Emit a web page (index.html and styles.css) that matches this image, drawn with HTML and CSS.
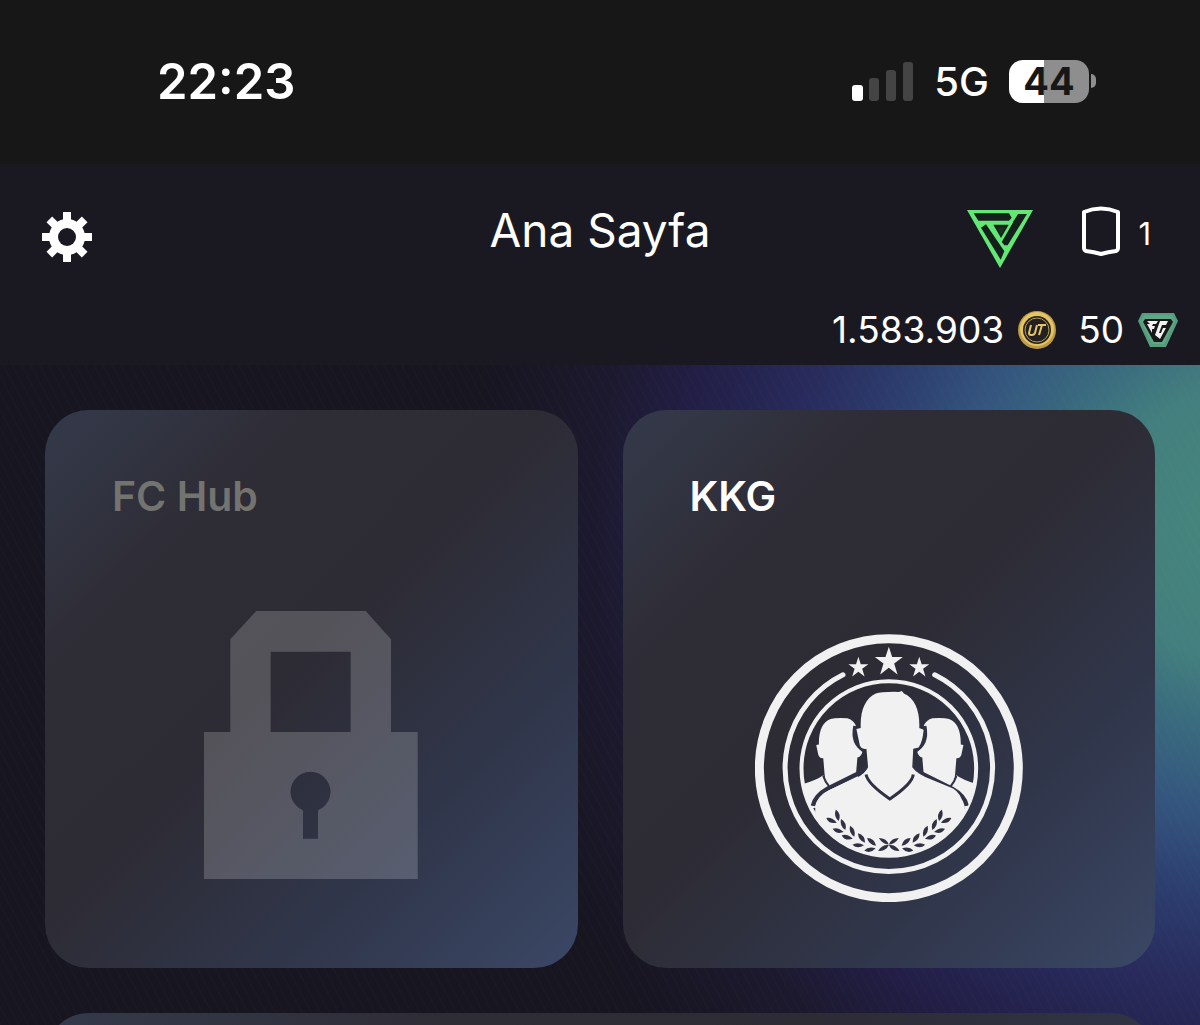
FILE: index.html
```html
<!DOCTYPE html>
<html lang="tr">
<head>
  <meta charset="UTF-8">
  <meta name="viewport" content="width=device-width, initial-scale=1.0">
  <title>Ana Sayfa</title>
  <link rel="stylesheet" href="styles.css">
</head>
<body>

<div class="status-bar">
  <time class="clock">22:23</time>
  <div class="status-right">
    <svg class="signal" viewBox="0 0 62 40" aria-hidden="true">
      <rect x="0" y="24" width="11" height="16" rx="3" fill="#fff"/>
      <rect x="17" y="17" width="10" height="23" rx="3"/>
      <rect x="34" y="9" width="10" height="31" rx="3"/>
      <rect x="51" y="1" width="10" height="39" rx="3"/>
    </svg>
    <span class="network">5G</span>
    <div class="battery">44</div>
    <span class="battery-tip"></span>
  </div>
</div>

<header class="header">
  <div class="title-row">
    <button class="icon-btn" aria-label="Ayarlar">
      <svg class="gear" viewBox="0 0 50 50">
        <g fill="#fff">
          <rect id="tooth" x="21" y="0" width="8" height="50"/>
          <use href="#tooth" transform="rotate(45 25 25)"/>
          <use href="#tooth" transform="rotate(90 25 25)"/>
          <use href="#tooth" transform="rotate(135 25 25)"/>
          <circle cx="25" cy="25" r="18"/>
        </g>
        <circle cx="25" cy="25" r="9" fill="#1a1922"/>
      </svg>
    </button>
    <h1>Ana Sayfa</h1>
    <div class="title-icons">
      <svg class="triangle" viewBox="0 0 198 174" aria-hidden="true">
        <path d="M0 0H198L99 174Z" fill="#63e875"/>
        <path d="M20 10H126L134 23L126 32H34Z" fill="#15201d"/>
        <path d="M153 12H180L122 106H112L102 93Z" fill="#15201d"/>
        <path d="M57 43L112 124L101 149L42 53Z" fill="#15201d"/>
        <path d="M72 40H132L102 92Z" fill="#15201d" stroke="#63e875" stroke-width="8"/>
        <path d="M88 52H116L102 76Z" fill="#17301f"/>
      </svg>
      <svg class="shield" viewBox="0 0 38 50" aria-hidden="true">
        <path d="M2 6Q19 -1 36 6V42Q36 44 34 45Q26 46 19 48Q12 46 4 45Q2 44 2 42Z" fill="none" stroke="#fff" stroke-width="4" stroke-linejoin="round"/>
      </svg>
      <span class="shield-count">1</span>
    </div>
  </div>
  <div class="currency-row">
    <span>1.583.903</span>
    <svg class="coin" viewBox="0 0 38 38" aria-hidden="true">
      <circle cx="19" cy="19" r="19" fill="#bd9a48"/>
      <circle cx="19" cy="18" r="17" fill="#e4c565"/>
      <circle cx="19" cy="19" r="14" fill="#29241c"/>
      <circle cx="19" cy="19" r="12" fill="#242022" stroke="#b99a50"/>
      <path d="M13 14L11 22Q11 24 13 24H14Q16 24 17 22L19 14M20 14H28M24 14L21 24" fill="none" stroke="#e4c565" stroke-width="2"/>
    </svg>
    <span class="points">50</span>
    <svg class="fc-points" viewBox="0 0 40 34" aria-hidden="true">
      <path d="M4 0H36L40 8L28 34H12L0 8Z" fill="#559d7d"/>
      <path d="M6 2H34L37 8L26 31H14L3 8Z" fill="#5fa887"/>
      <path d="M7 6H33L35 9L24 29H16L5 9Z" fill="#171918"/>
      <path d="M9 8H20L18 11H15L14 13H17L16 16H14V20L9 11H12ZM22 8H30L28 12H24L21 20H23L25 15H28L22 26L17 22Z" fill="#f2f2f2"/>
    </svg>
  </div>
</header>

<main class="content">
  <button class="card locked" disabled>
    <span class="card-title">FC Hub</span>
    <svg class="lock" viewBox="75 63 642 804" aria-hidden="true">
      <path fill-rule="evenodd" d="M232 63H560L636 148V426H716V867H75V426H154V148ZM275 185V426H515V185ZM372 661V746H417V661A60 60 0 1 0 372 661Z"/>
    </svg>
  </button>

  <button class="card">
    <span class="card-title">KKG</span>
    <svg class="emblem" viewBox="48 43 801 801" aria-hidden="true">
      <defs>
        <clipPath id="disc"><circle cx="448" cy="445" r="262"/></clipPath>
        <path id="star" d="M0 -45L10 -14H42L16 5L26 38L0 18L-26 38L-16 5L-42 -14H-10Z"/>
        <g id="sprig">
          <path d="M0 0Q-18 -12 -13 -33Q6 -22 0 0Z"/>
          <path d="M-5 6Q-21 -10 -38 -4Q-27 14 -5 6Z"/>
        </g>
        <g id="laurel">
          <use href="#sprig" transform="translate(298 602) rotate(8)"/>
          <use href="#sprig" transform="translate(318 629)"/>
          <use href="#sprig" transform="translate(345 649)"/>
          <use href="#sprig" transform="translate(377 667) rotate(-15)"/>
          <use href="#sprig" transform="translate(410 676) rotate(-28)"/>
          <path d="M448 672Q431 673 418 653Q440 653 448 672ZM448 674Q429 671 416 691Q439 694 448 674Z"/>
        </g>
        <g id="side">
          <path d="M252 414Q240 415 237 403L231 375L239 373C238 330 251 306 274 297Q290 293 324 295C338 299 347 308 350 319L342 345Q347 377 369 396Q365 411 354 412L350 461L262 520L256 462Z" fill="#f1f1f1"/>
          <path d="M180 495Q232 480 252 465L269 501L350 458L360 480L240 560L190 570Z" fill="#f1f1f1"/>
          <path d="M252 467Q257 483 269 498" fill="none" stroke="#303243" stroke-width="6"/>
          <path d="M221 557Q226 527 265 505L352 462Q374 451 386 432" fill="none" stroke="#303243" stroke-width="13"/>
          <path d="M347 318Q337 371 374 390" fill="none" stroke="#303243" stroke-width="11"/>
        </g>
      </defs>
      <circle cx="448" cy="444" r="387" fill="none" stroke="#f1f1f1" stroke-width="27"/>
      <path d="M311 165A310 310 0 1 0 585 165" fill="none" stroke="#f1f1f1" stroke-width="15" stroke-linecap="round"/>
      <circle cx="448" cy="445" r="261" fill="none" stroke="#f1f1f1" stroke-width="12"/>
      <g fill="#f1f1f1">
        <use href="#star" transform="translate(448 126)"/>
        <use href="#star" transform="translate(357 143) scale(.71)"/>
        <use href="#star" transform="translate(539 143) scale(.71)"/>
      </g>
      <g clip-path="url(#disc)">
        <use href="#side"/>
        <use href="#side" transform="translate(902 0) scale(-1 1)"/>
        <path d="M381 386Q366 389 361 375L351 327L364 324C362 270 378 236 409 221Q425 215 478 216L487 213L493 221C527 236 541 274 539 324L552 329Q549 366 537 382L521 386L518 441Q532 461 575 478L640 505Q665 519 673 560V720H228V560Q236 524 270 509L350 473Q377 461 386 441Z" fill="#f1f1f1"/>
        <path d="M380 463Q385 491 451 536Q518 491 521 463" fill="none" stroke="#303243" stroke-width="9"/>
        <g fill="#303243">
          <use href="#laurel"/>
          <use href="#laurel" transform="translate(896 0) scale(-1 1)"/>
        </g>
      </g>
    </svg>
  </button>

  <section class="card wide"></section>
</main>

</body>
</html>
```
FILE: styles.css
```css
* {
  box-sizing: border-box;
  margin: 0;
  padding: 0;
}

body {
  display: flex;
  flex-direction: column;
  height: 100vh;
  overflow: hidden;
  background: #171520;
  color: #fff;
  font-family: Inter, sans-serif;
}

button {
  border: none;
  background: none;
  color: inherit;
  font-family: inherit;
  cursor: pointer;
}

svg {
  display: block;
  flex-shrink: 0;
}

/* status bar */
.status-bar {
  display: flex;
  justify-content: space-between;
  align-items: center;
  flex-shrink: 0;
  height: 164px;
  padding: 0 104px 2px 157px;
  background: #171717;
}

.clock {
  font-size: 49px;
  font-weight: 600;
}

.status-right {
  display: flex;
  align-items: center;
}

.signal {
  width: 62px;
  height: 40px;
  fill: #444;
}

.network {
  margin: 0 20px;
  font-size: 40px;
  font-weight: 500;
}

.battery {
  width: 80px;
  height: 43px;
  border-radius: 14px;
  background: linear-gradient(90deg, #fff 44%, #8e8e8e 44%);
  color: #171717;
  font-size: 38px;
  font-weight: 700;
  line-height: 43px;
  text-align: center;
}

.battery-tip {
  width: 5px;
  height: 14px;
  margin-left: 2px;
  border-radius: 0 7px 7px 0;
  background: #8e8e8e;
}

/* header */
.header {
  flex-shrink: 0;
  height: 201px;
  background: #1a1922;
}

.title-row {
  display: grid;
  grid-template-columns: 1fr auto 1fr;
  align-items: center;
  height: 132px;
  padding: 0 42px;
}

.icon-btn {
  justify-self: start;
  margin-top: 14px;
}

.gear {
  width: 50px;
  height: 50px;
}

h1 {
  font-size: 46px;
  font-weight: 400;
}

.title-icons {
  display: flex;
  justify-content: flex-end;
  align-items: center;
  padding-right: 7px;
}

.triangle {
  width: 66px;
  height: 58px;
  margin-top: 18px;
}

.shield {
  width: 38px;
  height: 50px;
  margin: 2px 18px 0 49px;
}

.shield-count {
  margin-top: 6px;
  font-size: 31px;
}

.currency-row {
  display: flex;
  justify-content: flex-end;
  align-items: center;
  height: 67px;
  padding-right: 22px;
  font-size: 37px;
}

.coin {
  width: 38px;
  height: 38px;
  margin: 0 22px 0 14px;
}

.fc-points {
  width: 40px;
  height: 34px;
  margin-left: 14px;
}

/* cards */
.content {
  display: grid;
  grid-template-columns: 1fr 1fr;
  grid-auto-rows: 558px;
  gap: 45px;
  flex: 1;
  padding: 45px;
  overflow: hidden;
  background:
    repeating-linear-gradient(62deg, rgba(255, 255, 255, 0.01) 0 1px, transparent 2px 8px),
    radial-gradient(ellipse 780px 780px at 104% 160px, #46877c 0%, #437f7e 18%, #3a6c7e 26%, #34557e 37%, #2c3d6e 48%, #282b5c 59%, #221e46 73%, #1c192e 84%, #171520 100%);
}

.card {
  display: flex;
  flex-direction: column;
  align-items: center;
  padding: 62px 67px 66px;
  border-radius: 44px;
  background: linear-gradient(135deg, #343a4b 0%, #2e2c35 25%, #2d2b34 46%, #30364a 72%, #3a4765 100%);
}

.card-title {
  align-self: flex-start;
  font-size: 41px;
  font-weight: 600;
  line-height: 48px;
}

.locked {
  padding-bottom: 89px;
  cursor: default;
}

.locked .card-title {
  color: #737370;
}

.lock {
  width: 214px;
  height: 268px;
  margin-top: auto;
  fill: #fff;
  opacity: 0.19;
}

.emblem {
  width: 268px;
  height: 268px;
  margin-top: auto;
}

.wide {
  grid-column: 1 / -1;
}
```
